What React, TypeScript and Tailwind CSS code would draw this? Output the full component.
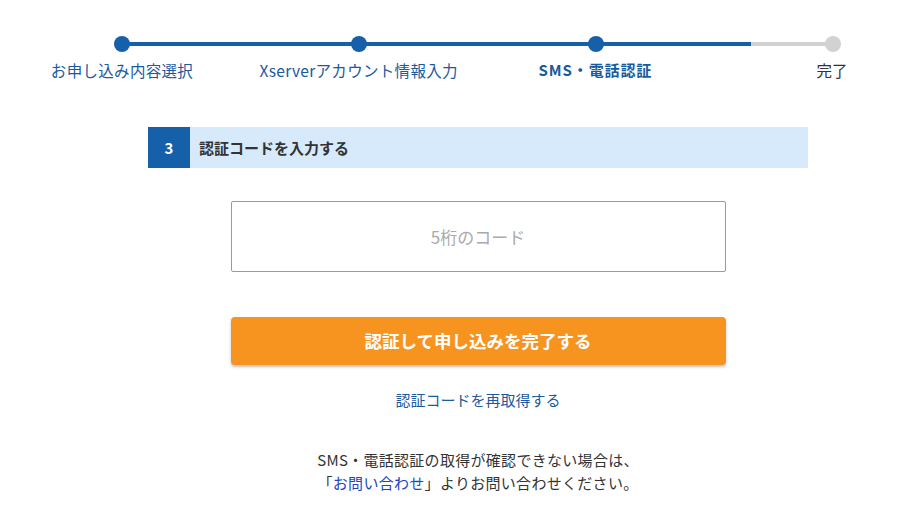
import React from "react";

const steps = [
  { label: "お申し込み内容選択", done: true },
  { label: "Xserverアカウント情報入力", done: true },
  { label: "SMS・電話認証", done: true, current: true },
  { label: "完了", done: false },
];

function Stepper() {
  return (
    <div className="pt-[36px] pl-[122px]">
      <div className="flex items-center h-[16px]">
        {steps.map((step, i) => (
          <React.Fragment key={step.label}>
            <div
              className={
                step.done
                  ? "w-[16px] h-[16px] rounded-full bg-[#1660aa] shrink-0 -mx-[8px] z-10"
                  : "w-[16px] h-[16px] rounded-full bg-[#d2d2d2] shrink-0 -mx-[8px] z-10"
              }
            />
            {i === 0 && <div className="w-[237px] h-[4px] bg-[#1660aa]" />}
            {i === 1 && <div className="w-[237px] h-[4px] bg-[#1660aa]" />}
            {i === 2 && (
              <div className="w-[237px] h-[4px] flex">
                <div className="w-[155px] bg-[#1660aa]" />
                <div className="flex-1 bg-[#d2d2d2]" />
              </div>
            )}
          </React.Fragment>
        ))}
      </div>
      <div className="flex mt-[7px]">
        {steps.map((step, i) => (
          <div
            key={step.label}
            className={i < 3 ? "w-[236.7px] flex" : "w-0 flex"}
          >
            <div className="w-0 flex justify-center">
              <span
                className={
                  step.current
                    ? "whitespace-nowrap text-[15px] font-bold text-[#1a5a9e] tracking-[0.06em]"
                    : step.done
                    ? "whitespace-nowrap text-[15.5px] text-[#1a5a9e] tracking-[0.02em]"
                    : "whitespace-nowrap text-[15.5px] text-[#333]"
                }
              >
                {step.label}
              </span>
            </div>
          </div>
        ))}
      </div>
    </div>
  );
}

export default function App() {
  return (
    <div
      className="w-[900px] h-[530px] bg-white overflow-hidden"
      style={{ fontFamily: '"Noto Sans CJK JP", "Noto Sans", sans-serif' }}
    >
      <Stepper />

      <div className="mt-[45px] ml-[148px] w-[660px]">
        <div className="h-[41px] flex bg-[#d7eafc]">
          <div className="w-[42px] h-full bg-[#1660aa] flex items-center justify-center text-white font-bold text-[15px]">
            3
          </div>
          <div className="pl-[9px] flex items-center text-[15px] font-bold text-[#333]">
            認証コードを入力する
          </div>
        </div>

        <div className="flex flex-col items-center">
          <input
            type="text"
            placeholder="5桁のコード"
            className="mt-[33px] w-[495px] h-[71px] border border-[#9a9a9a] rounded-[2px] text-center text-[17px] placeholder:text-[#aaa] outline-none"
          />
          <button className="mt-[45px] w-[495px] h-[48px] rounded-[4px] bg-[#f7941f] text-white font-bold text-[17.5px] shadow-[0_2px_3px_rgba(0,0,0,0.25)]">
            認証して申し込みを完了する
          </button>
          <a className="mt-[24px] text-[15px] text-[#1a5a9e]">認証コードを再取得する</a>
          <div className="mt-[36px] text-center text-[15px] leading-[23px] text-[#333] tracking-[0.02em]">
            <p>SMS・電話認証の取得が確認できない場合は、</p>
            <p>
              「<span className="text-[#1b45c5]">お問い合わせ</span>」よりお問い合わせください。
            </p>
          </div>
        </div>
      </div>
    </div>
  );
}
